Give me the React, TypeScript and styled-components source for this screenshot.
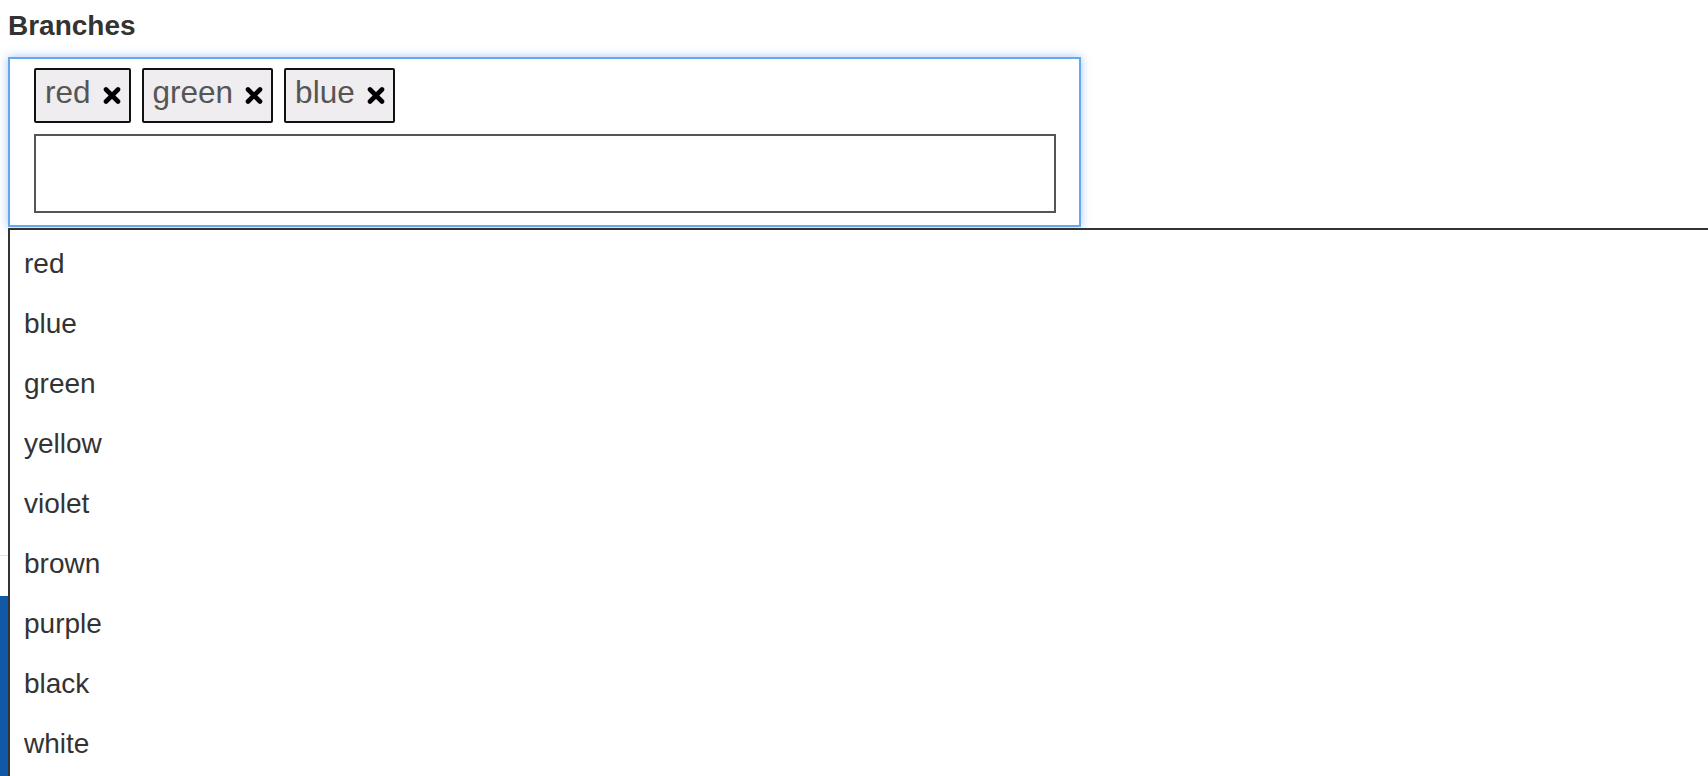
import React from "react";
import styled, { createGlobalStyle } from "styled-components";

const GlobalStyle = createGlobalStyle`
  html, body {
    margin: 0;
    padding: 0;
    background: #fff;
  }
  body {
    font-family: "Liberation Sans", Arial, Helvetica, sans-serif;
  }
`;

const Page = styled.div`
  position: relative;
  width: 100vw;
  height: 100vh;
  overflow: hidden;
`;

const Content = styled.div`
  padding: 8px 8px 0;
`;

const Label = styled.label`
  display: block;
  padding-top: 2px;
  margin-bottom: 16px;
  font-size: 28px;
  line-height: 31px;
  font-weight: bold;
  color: #333;
`;

const Field = styled.div`
  position: relative;
  width: 1073px;
`;

const Box = styled.div`
  box-sizing: border-box;
  width: 1073px;
  padding: 9px 23px 12px 24px;
  border: 2px solid #64a9ee;
  box-shadow: 0 0 9px rgba(90, 150, 240, 0.55);
  background: #fff;
`;

const Chips = styled.div`
  display: flex;
  flex-wrap: wrap;
  gap: 11px;
`;

const Chip = styled.span`
  box-sizing: border-box;
  display: inline-flex;
  align-items: center;
  height: 55px;
  padding: 0 8px 6px 9px;
  border: 2px solid #111;
  border-radius: 2px;
  background: #efedef;
  color: #555;
  font-size: 31.5px;
  line-height: 1;
`;

const Remove = styled.span`
  display: inline-flex;
  margin-left: 12px;
  margin-top: 5px;
`;

const TextInput = styled.input`
  display: block;
  box-sizing: border-box;
  width: 100%;
  height: 79px;
  margin-top: 11px;
  border: 2px solid #555;
  border-radius: 0;
  outline: none;
  background: #fff;
  font-family: inherit;
  font-size: 28px;
`;

const Dropdown = styled.ul`
  position: absolute;
  top: calc(100% + 1px);
  left: 0;
  z-index: 5;
  box-sizing: border-box;
  width: 1760px;
  margin: 0;
  padding: 4px 0 40px;
  list-style: none;
  border: 2px solid #333;
  border-right: none;
  border-bottom: none;
  background: #fff;
`;

const Option = styled.li`
  height: 60px;
  padding-left: 14px;
  line-height: 60px;
  font-size: 28px;
  color: #333;
`;

const Divider = styled.div`
  margin-top: 328px;
  border-top: 1px solid #e3e3e3;
`;

const Footer = styled.div`
  height: 300px;
  margin-top: 40px;
  background: #1158a7;
`;

const XIcon = () => (
  <svg width="18" height="17" viewBox="0 0 18 17">
    <path
      d="M3 2.5 L15 14.5 M15 2.5 L3 14.5"
      stroke="#000"
      strokeWidth="4.6"
      strokeLinecap="round"
    />
  </svg>
);

const selected = ["red", "green", "blue"];
const options = ["red", "blue", "green", "yellow", "violet", "brown", "purple", "black", "white"];

export default function App() {
  return (
    <Page>
      <GlobalStyle />
      <Content>
        <Label>Branches</Label>
        <Field>
          <Box>
            <Chips>
              {selected.map((c) => (
                <Chip key={c}>
                  {c}
                  <Remove>
                    <XIcon />
                  </Remove>
                </Chip>
              ))}
            </Chips>
            <TextInput type="text" />
          </Box>
          <Dropdown>
            {options.map((o) => (
              <Option key={o}>{o}</Option>
            ))}
          </Dropdown>
        </Field>
      </Content>
      <Divider />
      <Footer />
    </Page>
  );
}
